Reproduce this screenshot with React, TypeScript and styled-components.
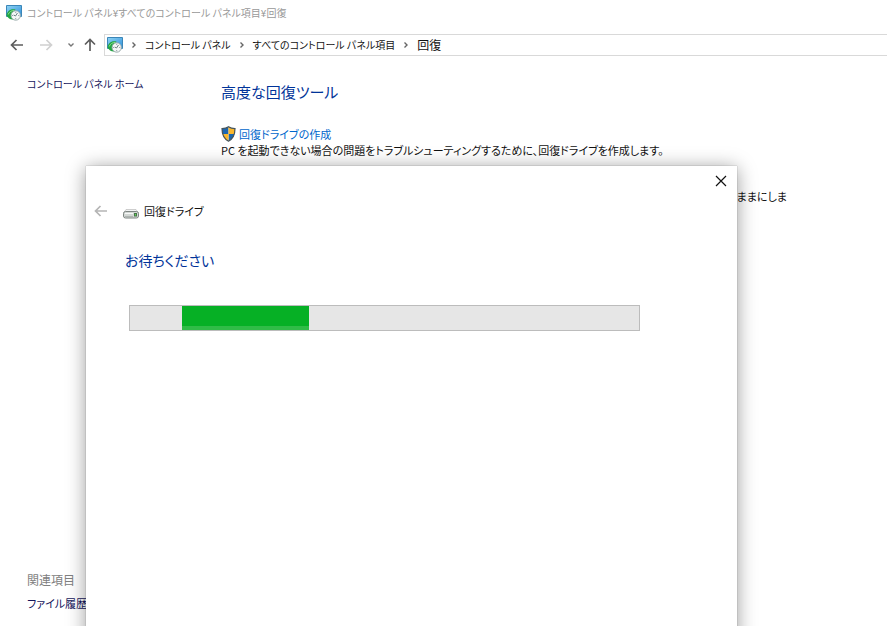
import React from "react";
import styled, { createGlobalStyle } from "styled-components";

const GlobalStyle = createGlobalStyle`
  * { box-sizing: border-box; }
  body {
    margin: 0;
    background: #fff;
    color: #111;
    font: 11px/16px "Noto Sans CJK JP", sans-serif;
    font-feature-settings: "palt";
  }
  button {
    display: grid;
    place-items: center;
    padding: 0;
    border: 0;
    background: none;
    color: inherit;
    font: inherit;
    font-feature-settings: inherit;
  }
  h1, h2, p { margin: 0; font-weight: 400; }
  svg { display: block; flex: none; }
`;

const Window = styled.div`
  position: relative;
  display: flex;
  flex-direction: column;
  min-height: 100vh;
  overflow: hidden;
`;

const TitleBar = styled.header`
  display: flex;
  align-items: center;
  gap: 5px;
  height: 25px;
  padding-left: 6px;
  color: #999;
  font-size: 10px;
  white-space: nowrap;
`;

const Toolbar = styled.nav`
  display: flex;
  align-items: center;
  margin-top: 9px;
  padding-left: 9px;
`;

const NavButton = styled.button<{ $width: number; $color: string }>`
  width: ${(p) => p.$width}px;
  height: 20px;
  color: ${(p) => p.$color};
`;

const AddressBar = styled.div`
  display: flex;
  flex: 1;
  align-items: center;
  height: 22px;
  padding-left: 2px;
  border: 1px solid #d9d9d9;
  border-right: 0;
  font-size: 10px;
  white-space: nowrap;
`;

const Crumb = styled.button`
  &:last-child { font-size: 12px; }
`;

const Separator = styled.span`
  display: grid;
  place-items: center;
  width: 22px;
  color: #666;
`;

const Body = styled.div`
  display: flex;
  flex: 1;
  padding: 20px 0 15px 27px;
`;

const Sidebar = styled.aside`
  display: flex;
  flex: 0 0 194px;
  flex-direction: column;
  align-items: flex-start;
`;

const SideLink = styled.a<{ $size: number }>`
  color: #15155c;
  font-size: ${(p) => p.$size}px;
  text-decoration: none;
`;

const Related = styled.div`
  display: flex;
  flex-direction: column;
  gap: 7px;
  margin-top: auto;
  color: #808080;
  font-size: 12px;
`;

const Main = styled.main`
  flex: 1;
  padding-top: 4px;
`;

const Heading = styled.h1<{ $size: number }>`
  color: #003399;
  font-size: ${(p) => p.$size}px;
  line-height: 24px;
`;

const Tool = styled.section`
  max-width: 566px;
  margin-top: 22px;
  text-align: justify;

  & + & { margin-top: 14px; }
`;

const ToolLink = styled.a`
  display: flex;
  align-items: center;
  gap: 3px;
  color: #0066cc;
  text-decoration: none;
`;

const Dialog = styled.section`
  position: absolute;
  top: 166px;
  right: 150px;
  bottom: -20px;
  left: 86px;
  background: #fff;
  box-shadow: 0 0 1px rgba(0, 0, 0, 0.4), 0 2px 18px rgba(0, 0, 0, 0.4);
`;

const DialogTop = styled.div`
  display: flex;
  justify-content: flex-end;
  padding: 5px 6px 0;
`;

const CloseButton = styled.button`
  width: 20px;
  height: 20px;
`;

const DialogTitle = styled.div`
  display: flex;
  align-items: center;
  margin-top: 10px;
  padding-left: 8px;
`;

const DialogName = styled.h2`
  display: flex;
  align-items: center;
  gap: 5px;
  margin-left: 15px;
  font-size: 11px;
  line-height: 16px;
`;

const DialogContent = styled.div`
  padding: 27px 97px 0 39px;
`;

const Progress = styled.div`
  height: 26px;
  margin: 33px 0 0 4px;
  border: 1px solid #bcbcbc;
  background: #e6e6e6;
`;

const ProgressChunk = styled.div`
  width: 25%;
  height: 100%;
  margin-left: 52px;
  background: linear-gradient(#06b025 0 84%, #30bc47 84%);
`;

const RecoveryIcon = () => (
  <svg width="16" height="16" viewBox="0 0 16 16" aria-hidden="true">
    <defs>
      <linearGradient id="screen" x1="0" y1="0" x2="1" y2="1">
        <stop offset="0" stopColor="#8fd4f5" />
        <stop offset="1" stopColor="#2f8fd8" />
      </linearGradient>
    </defs>
    <path d="M.5.5h15v11H.5z" fill="url(#screen)" stroke="#3b86b8" />
    <path d="M.5 10.500C1 6 4.500 3.200 9.500 4.500L8.500 7C6.500 8.500 6 11 7.500 14.500 4.500 15 2 13 .5 10.500z" fill="#22a642" />
    <path d="M2.200 9.500C3.200 6.700 5.700 5.300 8.500 5.500" fill="none" stroke="#8be08f" />
    <circle cx="9.700" cy="10.500" r="4.700" fill="#f5f7f7" stroke="#93a5a6" strokeWidth=".9" />
    <path d="m11.500 8-2 3-1.800-1M9.700 6.900v.8M9.700 13.300v.8M6.300 10.500h.8M12.400 10.500h.8" fill="none" stroke="#4a6266" strokeWidth=".8" />
  </svg>
);

const ArrowIcon = ({ turn = 0 }: { turn?: number }) => (
  <svg width="14" height="14" viewBox="0 0 14 14" aria-hidden="true">
    <path
      d="M13 7H2M6.500 2 1.500 7l5 5"
      transform={`rotate(${turn} 7 7)`}
      fill="none"
      stroke="currentColor"
      strokeWidth="1.700"
    />
  </svg>
);

const ChevronIcon = ({ turn = 0 }: { turn?: number }) => (
  <svg width="8" height="8" viewBox="0 0 8 8" aria-hidden="true">
    <path
      d="m2.500 1.500 2.500 2.500-2.500 2.500"
      transform={`rotate(${turn} 4 4)`}
      fill="none"
      stroke="currentColor"
      strokeWidth="1.400"
    />
  </svg>
);

const ShieldIcon = () => (
  <svg width="15" height="16" viewBox="0 0 15 16" aria-hidden="true">
    <clipPath id="shield">
      <path d="M7.500.8C9.500 2.200 11.500 2.600 14 2.600c0 6-1.300 10-6.500 12.600C2.300 12.600 1 8.600 1 2.600c2.500 0 4.500-.4 6.500-1.800z" />
    </clipPath>
    <g clipPath="url(#shield)">
      <path d="M0 0h7.500v8H0zM7.500 8H15v8H7.500z" fill="#1c67b0" />
      <path d="M7.500 0H15v8H7.500zM0 8h7.500v8H0z" fill="#fbb72c" />
    </g>
    <path d="M7.500.8C9.500 2.200 11.500 2.600 14 2.600c0 6-1.300 10-6.500 12.600C2.300 12.600 1 8.600 1 2.600c2.500 0 4.500-.4 6.500-1.800z" fill="none" stroke="#45545c" strokeWidth="1.200" />
  </svg>
);

const DriveIcon = () => (
  <svg width="16" height="16" viewBox="0 0 16 16" aria-hidden="true">
    <path d="M3 6.500h10l2.500 4h-15z" fill="#f1f3f3" stroke="#bbb" strokeWidth=".7" />
    <rect x=".5" y="8.500" width="15" height="6.500" rx="2" fill="#d3d8d5" stroke="#7f8683" />
    <path d="M2 10.500h8" stroke="#f7f8f8" />
    <path d="M2 13.500h8" stroke="#b0b6b3" />
    <path d="M11 10h3v3.500h-3z" fill="#477448" />
    <path d="M12 11h1v1.500h-1z" fill="#61df58" />
  </svg>
);

const CloseIcon = () => (
  <svg width="12" height="12" viewBox="0 0 12 12" aria-hidden="true">
    <path d="m1 1 10 10M11 1 1 11" stroke="#111" strokeWidth="1.200" />
  </svg>
);

const crumbs = ["コントロール パネル", "すべてのコントロール パネル項目", "回復"];

export default function App() {
  return (
    <>
      <GlobalStyle />
      <Window>
        <TitleBar>
          <RecoveryIcon />
          <span>コントロール パネル¥すべてのコントロール パネル項目¥回復</span>
        </TitleBar>
        <Toolbar aria-label="ナビゲーション">
          <NavButton $width={16} $color="#5d5d5d" aria-label="戻る">
            <ArrowIcon />
          </NavButton>
          <NavButton $width={42} $color="#d0d0d0" aria-label="進む">
            <ArrowIcon turn={180} />
          </NavButton>
          <NavButton $width={8} $color="#777" aria-label="最近表示した場所">
            <ChevronIcon turn={90} />
          </NavButton>
          <NavButton $width={29} $color="#5d5d5d" aria-label="上へ">
            <ArrowIcon turn={90} />
          </NavButton>
          <AddressBar>
            <RecoveryIcon />
            {crumbs.map((crumb) => (
              <React.Fragment key={crumb}>
                <Separator>
                  <ChevronIcon />
                </Separator>
                <Crumb>{crumb}</Crumb>
              </React.Fragment>
            ))}
          </AddressBar>
        </Toolbar>
        <Body>
          <Sidebar>
            <SideLink href="#home" $size={10}>コントロール パネル ホーム</SideLink>
            <Related>
              <span>関連項目</span>
              <SideLink href="#history" $size={11}>ファイル履歴</SideLink>
            </Related>
          </Sidebar>
          <Main>
            <Heading $size={15}>高度な回復ツール</Heading>
            <Tool>
              <ToolLink href="#create">
                <ShieldIcon />
                回復ドライブの作成
              </ToolLink>
              <p>PC を起動できない場合の問題をトラブルシューティングするために、回復ドライブを作成します。</p>
            </Tool>
            <Tool>
              <ToolLink href="#restore">
                <ShieldIcon />
                システムの復元を開く
              </ToolLink>
              <p>
                PC に対して最近行ったシステムの変更を元に戻しますが、ドキュメント、画像、音楽などの個人用ファイルはそのままにします。
              </p>
            </Tool>
          </Main>
        </Body>
        <Dialog role="dialog" aria-labelledby="dialog-name">
          <DialogTop>
            <CloseButton aria-label="閉じる">
              <CloseIcon />
            </CloseButton>
          </DialogTop>
          <DialogTitle>
            <NavButton $width={14} $color="#b5b5b5" aria-label="前へ">
              <ArrowIcon />
            </NavButton>
            <DialogName id="dialog-name">
              <DriveIcon />
              回復ドライブ
            </DialogName>
          </DialogTitle>
          <DialogContent>
            <Heading as="h2" $size={14}>お待ちください</Heading>
            <Progress role="progressbar" aria-label="お待ちください">
              <ProgressChunk />
            </Progress>
          </DialogContent>
        </Dialog>
      </Window>
    </>
  );
}
